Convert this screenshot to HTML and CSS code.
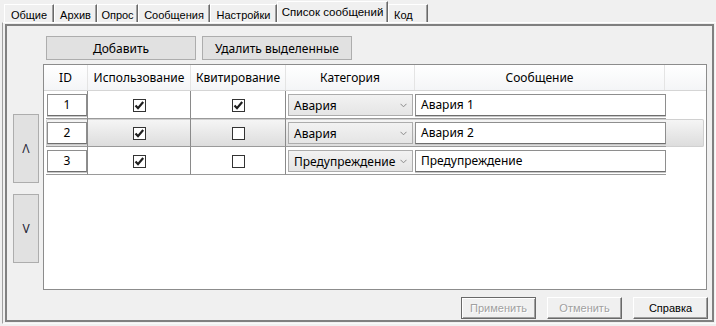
FILE: index.html
```html
<!DOCTYPE html>
<html lang="ru">
<head>
    <meta charset="UTF-8">
    <meta name="viewport" content="width=device-width, initial-scale=1.0">
    <title>Список сообщений</title>
    <link rel="stylesheet" href="styles.css">
</head>
<body>
    <div class="tabs">
        <div class="tab t-common">Общие</div>
        <div class="tab t-archive">Архив</div>
        <div class="tab t-poll">Опрос</div>
        <div class="tab t-msgs">Сообщения</div>
        <div class="tab t-settings">Настройки</div>
        <div class="tab active t-list">Список сообщений</div>
        <div class="tab t-code">Код</div>
    </div>

    <div class="pane">
        <div class="pane-inner">
            <div class="toolbar">
                <button class="btn">Добавить</button>
                <button class="btn">Удалить выделенные</button>
            </div>

            <div class="main">
                <div class="side">
                    <button class="btn side-btn">Λ</button>
                    <button class="btn side-btn down">V</button>
                </div>

                <div class="grid">
                    <div class="grid-head">
                        <div class="hc c-id">ID</div>
                        <div class="hc c-use">Использование</div>
                        <div class="hc c-ack">Квитирование</div>
                        <div class="hc c-cat">Категория</div>
                        <div class="hc c-msg">Сообщение</div>
                        <div class="hc c-fill"></div>
                    </div>

                    <div class="grid-row">
                        <div class="cell r-id"><div class="textbox center">1</div></div>
                        <div class="cell r-use"><span class="check on"><svg width="13" height="13" viewBox="0 0 13 13"><path d="M2.5 6.5 L5 9.2 L10.2 3" fill="none" stroke="#1e1e1e" stroke-width="2.2"/></svg></span></div>
                        <div class="cell r-ack"><span class="check on"><svg width="13" height="13" viewBox="0 0 13 13"><path d="M2.5 6.5 L5 9.2 L10.2 3" fill="none" stroke="#1e1e1e" stroke-width="2.2"/></svg></span></div>
                        <div class="cell r-cat"><div class="combo"><span>Авария</span><svg width="7" height="5" viewBox="0 0 7 5"><path d="M0.5 0.8 L3.5 3.8 L6.5 0.8" fill="none" stroke="#8a8a8a" stroke-width="1"/></svg></div></div>
                        <div class="cell r-msg"><div class="textbox">Авария 1</div></div>
                    </div>

                    <div class="grid-row selected">
                        <div class="cell r-id"><div class="textbox center">2</div></div>
                        <div class="cell r-use"><span class="check on"><svg width="13" height="13" viewBox="0 0 13 13"><path d="M2.5 6.5 L5 9.2 L10.2 3" fill="none" stroke="#1e1e1e" stroke-width="2.2"/></svg></span></div>
                        <div class="cell r-ack"><span class="check"></span></div>
                        <div class="cell r-cat"><div class="combo"><span>Авария</span><svg width="7" height="5" viewBox="0 0 7 5"><path d="M0.5 0.8 L3.5 3.8 L6.5 0.8" fill="none" stroke="#8a8a8a" stroke-width="1"/></svg></div></div>
                        <div class="cell r-msg"><div class="textbox">Авария 2</div></div>
                    </div>

                    <div class="grid-row">
                        <div class="cell r-id"><div class="textbox center">3</div></div>
                        <div class="cell r-use"><span class="check on"><svg width="13" height="13" viewBox="0 0 13 13"><path d="M2.5 6.5 L5 9.2 L10.2 3" fill="none" stroke="#1e1e1e" stroke-width="2.2"/></svg></span></div>
                        <div class="cell r-ack"><span class="check"></span></div>
                        <div class="cell r-cat"><div class="combo"><span>Предупреждение</span><svg width="7" height="5" viewBox="0 0 7 5"><path d="M0.5 0.8 L3.5 3.8 L6.5 0.8" fill="none" stroke="#8a8a8a" stroke-width="1"/></svg></div></div>
                        <div class="cell r-msg"><div class="textbox">Предупреждение</div></div>
                    </div>
                </div>
            </div>

            <div class="footer">
                <button class="win-btn default" disabled>Применить</button>
                <button class="win-btn" disabled>Отменить</button>
                <button class="win-btn">Справка</button>
            </div>
        </div>
    </div>
</body>
</html>
```

FILE: styles.css
```css
body {
    margin: 0;
    width: 716px;
    height: 326px;
    overflow: hidden;
    background-color: #f0f0f0;
    font-family: "Liberation Sans", Arial, sans-serif;
    font-size: 11px;
    color: #000;
}

/* вкладки */
.tabs {
    display: flex;
    align-items: flex-end;
    height: 22px;
    padding-left: 4px;
}

.tab {
    box-sizing: border-box;
    height: 18px;
    padding-top: 3px;
    line-height: 14px;
    text-align: center;
    white-space: nowrap;
    border-top: 1px solid #fff;
    border-left: 1px solid #fff;
    border-right: 1px solid #696969;
    box-shadow: inset -1px 0 #a0a0a0;
}

.tab.active {
    height: 21px;
    padding-top: 3px;
    font-size: 11.5px;
}

.t-common { width: 50px; }
.t-archive { width: 43px; }
.t-poll { width: 41px; }
.t-msgs { width: 72px; }
.t-settings { width: 67px; }
.t-list { width: 111px; }
.t-code { width: 40px; text-align: left; padding-left: 5px; }

/* рамка вкладки */
.pane {
    box-sizing: border-box;
    margin-left: 2px;
    width: 714px;
    height: 302px;
    border: 1px solid;
    border-color: #fff #fafafa #fafafa #a0a0a0;
    padding: 1px 1px 1px 2px;
}

.pane-inner {
    box-sizing: border-box;
    height: 100%;
    border: 2px solid #808080;
    display: flex;
    flex-direction: column;
}

.btn {
    box-sizing: border-box;
    background-color: #e1e1e1;
    border: 1px solid #adadad;
    font-family: "Noto Sans", "Open Sans", sans-serif;
    font-size: 12px;
    color: #000;
    padding: 0;
}

.toolbar {
    display: flex;
    gap: 6px;
    margin-top: 10px;
    padding-left: 39px;
}

.toolbar .btn {
    width: 150px;
    height: 24px;
}

.main {
    display: flex;
    margin-top: 4px;
}

.side {
    display: flex;
    flex-direction: column;
    gap: 11px;
    margin-left: 6px;
    margin-right: 4px;
    padding-top: 50px;
}

.side-btn {
    width: 26px;
    height: 69px;
    color: #1c2333;
}

/* таблица */
.grid {
    box-sizing: border-box;
    width: 664px;
    height: 226px;
    background-color: #fff;
    border: 1px solid #8c8c8c;
    font-family: "Noto Sans", "Open Sans", sans-serif;
    font-size: 12px;
}

.grid-head {
    display: flex;
    height: 26px;
    box-sizing: border-box;
    border-bottom: 1px solid #d5d5d5;
    background: linear-gradient(#ffffff, #f4f5f7);
}

.hc {
    box-sizing: border-box;
    border-right: 1px solid #e4e4e4;
    line-height: 25px;
    text-align: center;
    white-space: nowrap;
}

.c-id { width: 44px; }
.c-use { width: 103px; }
.c-ack { width: 95px; }
.c-cat { width: 129px; }
.c-msg { width: 250px; }
.c-fill { flex: 1; border-right: none; }

.grid-row {
    display: flex;
    width: 658px;
    height: 28px;
    margin-left: 2px;
    box-sizing: border-box;
}

.grid-row.selected {
    background: linear-gradient(#f6f6f6, #dcdcdc);
    border-radius: 2px;
    box-shadow: inset 0 0 0 1px #d0d0d0;
}

.cell {
    box-sizing: border-box;
    height: 28px;
    padding-top: 3px;
    border-bottom: 1px solid #9a9a9a;
}

.r-id { width: 42px; border-right: 1px solid #8a8a8a; padding-left: 1px; }
.r-use { width: 103px; border-right: 1px solid #8a8a8a; }
.r-ack { width: 95px; border-right: 1px solid #8a8a8a; }
.r-cat { width: 129px; padding-left: 2px; }
.r-msg { width: 251px; }

.r-use, .r-ack {
    display: flex;
    justify-content: center;
    padding-top: 8px;
}

.textbox {
    box-sizing: border-box;
    height: 22px;
    background-color: #fff;
    border: 1px solid #8e8e8e;
    border-bottom-color: #6e6e6e;
    box-shadow: 0 1px 0 #c8c8c8;
    padding-left: 5px;
    line-height: 20px;
    white-space: nowrap;
}

.r-id .textbox { width: 40px; }

.textbox.center {
    padding-left: 0;
    text-align: center;
}

.check {
    box-sizing: border-box;
    display: block;
    width: 13px;
    height: 13px;
    border: 1px solid #333;
    background-color: #fff;
    position: relative;
}

.check svg {
    position: absolute;
    left: -1px;
    top: -1px;
}

.combo {
    box-sizing: border-box;
    display: flex;
    justify-content: space-between;
    align-items: center;
    width: 125px;
    height: 22px;
    padding: 0 5px 0 5px;
    border: 1px solid #acacac;
    background: linear-gradient(#f2f2f2, #e5e5e5);
    white-space: nowrap;
}

/* нижние кнопки */
.footer {
    display: flex;
    justify-content: flex-end;
    gap: 11px;
    margin-top: 7px;
    padding-right: 4px;
}

.win-btn {
    box-sizing: border-box;
    width: 75px;
    height: 22px;
    padding: 0;
    background-color: #f0f0f0;
    border: 1px solid;
    border-color: #fff #696969 #696969 #fff;
    box-shadow: inset -1px -1px #a0a0a0;
    font-family: "Liberation Sans", Arial, sans-serif;
    font-size: 11px;
    color: #000;
}

.win-btn:disabled {
    color: #a0a0a0;
    text-shadow: 1px 1px #fff;
}

.win-btn.default {
    border-color: #696969;
    box-shadow: inset 1px 1px #fff, inset -1px -1px #a0a0a0;
}
```
